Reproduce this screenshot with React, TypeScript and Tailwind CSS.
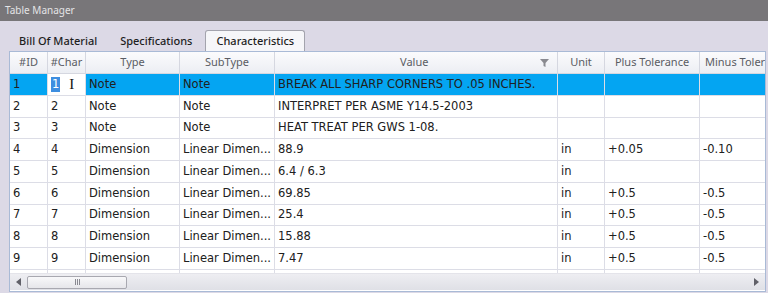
import React from "react";

const cols = [
  { label: "#ID", w: "w-[38px]" },
  { label: "#Char", w: "w-[38px]" },
  { label: "Type", w: "w-[94px]" },
  { label: "SubType", w: "w-[95px]" },
  { label: "Value", w: "w-[283px]" },
  { label: "Unit", w: "w-[47px]" },
  { label: "Plus Tolerance", w: "w-[95px]" },
  { label: "Minus Tolerance", w: "w-[100px]" },
];

const rows = [
  ["1", "1", "Note", "Note", "BREAK ALL SHARP CORNERS TO .05 INCHES.", "", "", ""],
  ["2", "2", "Note", "Note", "INTERPRET PER ASME Y14.5-2003", "", "", ""],
  ["3", "3", "Note", "Note", "HEAT TREAT PER GWS 1-08.", "", "", ""],
  ["4", "4", "Dimension", "Linear Dimen...", "88.9", "in", "+0.05", "-0.10"],
  ["5", "5", "Dimension", "Linear Dimen...", "6.4 / 6.3", "in", "", ""],
  ["6", "6", "Dimension", "Linear Dimen...", "69.85", "in", "+0.5", "-0.5"],
  ["7", "7", "Dimension", "Linear Dimen...", "25.4", "in", "+0.5", "-0.5"],
  ["8", "8", "Dimension", "Linear Dimen...", "15.88", "in", "+0.5", "-0.5"],
  ["9", "9", "Dimension", "Linear Dimen...", "7.47", "in", "+0.5", "-0.5"],
  ["10", "10", "Dimension", "Linear Dimen...", "3.2", "in", "+0.5", "-0.5"],
];

function FilterIcon() {
  return (
    <svg width="9" height="8" viewBox="0 0 9 8" className="shrink-0">
      <path d="M0 0 H9 L5.5 4 V8 L3.5 7 V4 Z" fill="#8a8a90" />
    </svg>
  );
}

function App() {
  return (
    <div className="w-[768px] h-[293px] bg-[#dcd9e6] flex flex-col overflow-hidden font-['Noto_Sans',sans-serif]">
      <div className="h-[21px] shrink-0 bg-[#787679] text-[#e4e4e6] text-[10px] leading-[21px] pl-[5px]">Table Manager</div>

      <div className="h-[30px] shrink-0 flex items-end pl-[9px] text-[11px] text-[#1e1e1e] font-medium">
        <div className="pl-[10px] pr-[23px] h-[20px] leading-[20px]">Bill Of Material</div>
        <div className="pr-[13px] h-[20px] leading-[20px]">Specifications</div>
        <div className="px-[10px] h-[21px] leading-[20px] bg-[#f6f6f9] border border-b-0 border-[#a3a3ad] rounded-t-[3px]">Characteristics</div>
      </div>

      <div className="ml-[9px] w-[757px] h-[241px] shrink-0 border border-[#a9bad6] bg-white flex flex-col overflow-hidden">
        <div className="flex h-[22px] shrink-0 bg-gradient-to-b from-[#fbfbfd] to-[#eceef3] border-b border-[#d5d7e0] text-[11px] text-[#5a5c63]">
          {cols.map((c, i) => (
            <div key={c.label} className={`${c.w} shrink-0 border-r border-[#d5d7e0] flex items-center ${i === 4 ? "justify-between pl-[125px] pr-[8px]" : i === 7 ? "pl-[5px]" : "justify-center"} whitespace-nowrap overflow-hidden`}>
              <span>{c.label}</span>
              {i === 4 && <FilterIcon />}
            </div>
          ))}
        </div>

        <div className="h-[199px] shrink-0 overflow-hidden font-['DejaVu_Sans',sans-serif] text-[11.5px] text-[#202020]">
          {rows.map((r, ri) => (
            <div key={ri} className={`flex h-[21.75px] border-b border-[#dcdde6] ${ri === 0 ? "bg-[#04a5f2]" : "bg-white"}`}>
              {r.map((v, ci) => (
                <div key={ci} className={`${cols[ci].w} shrink-0 border-r border-[#dcdde6] flex items-center pl-[3px] whitespace-nowrap overflow-hidden ${ri === 0 && ci === 1 ? "bg-white" : ""}`}>
                  {ri === 0 && ci === 1 ? (
                    <>
                      <span className="bg-[#3d8ee0] text-white px-[1px] leading-[15px]">1</span>
                      <span className="ml-[9px] text-[#111] text-[15px] leading-none font-['Liberation_Serif',serif]">I</span>
                    </>
                  ) : (
                    v
                  )}
                </div>
              ))}
            </div>
          ))}
        </div>

        <div className="h-[17px] shrink-0 flex items-center bg-gradient-to-b from-[#eeeef2] to-[#dfe0e6] border-t border-[#e4e4ea]">
          <div className="w-[17px] flex justify-center">
            <svg width="5" height="8" viewBox="0 0 5 8"><path d="M5 0 V8 L0 4 Z" fill="#606068" /></svg>
          </div>
          <div className="w-[100px] h-[13px] border border-[#a8a8b0] rounded-[2px] bg-gradient-to-b from-[#f8f8fa] to-[#e6e6ea] flex items-center justify-center gap-[1px]">
            <div className="w-px h-[6px] bg-[#8a8a92]" />
            <div className="w-px h-[6px] bg-[#8a8a92]" />
            <div className="w-px h-[6px] bg-[#8a8a92]" />
          </div>
          <div className="flex-1" />
          <div className="w-[17px] flex justify-center">
            <svg width="5" height="8" viewBox="0 0 5 8"><path d="M0 0 V8 L5 4 Z" fill="#606068" /></svg>
          </div>
        </div>
      </div>
    </div>
  );
}

export default App;
